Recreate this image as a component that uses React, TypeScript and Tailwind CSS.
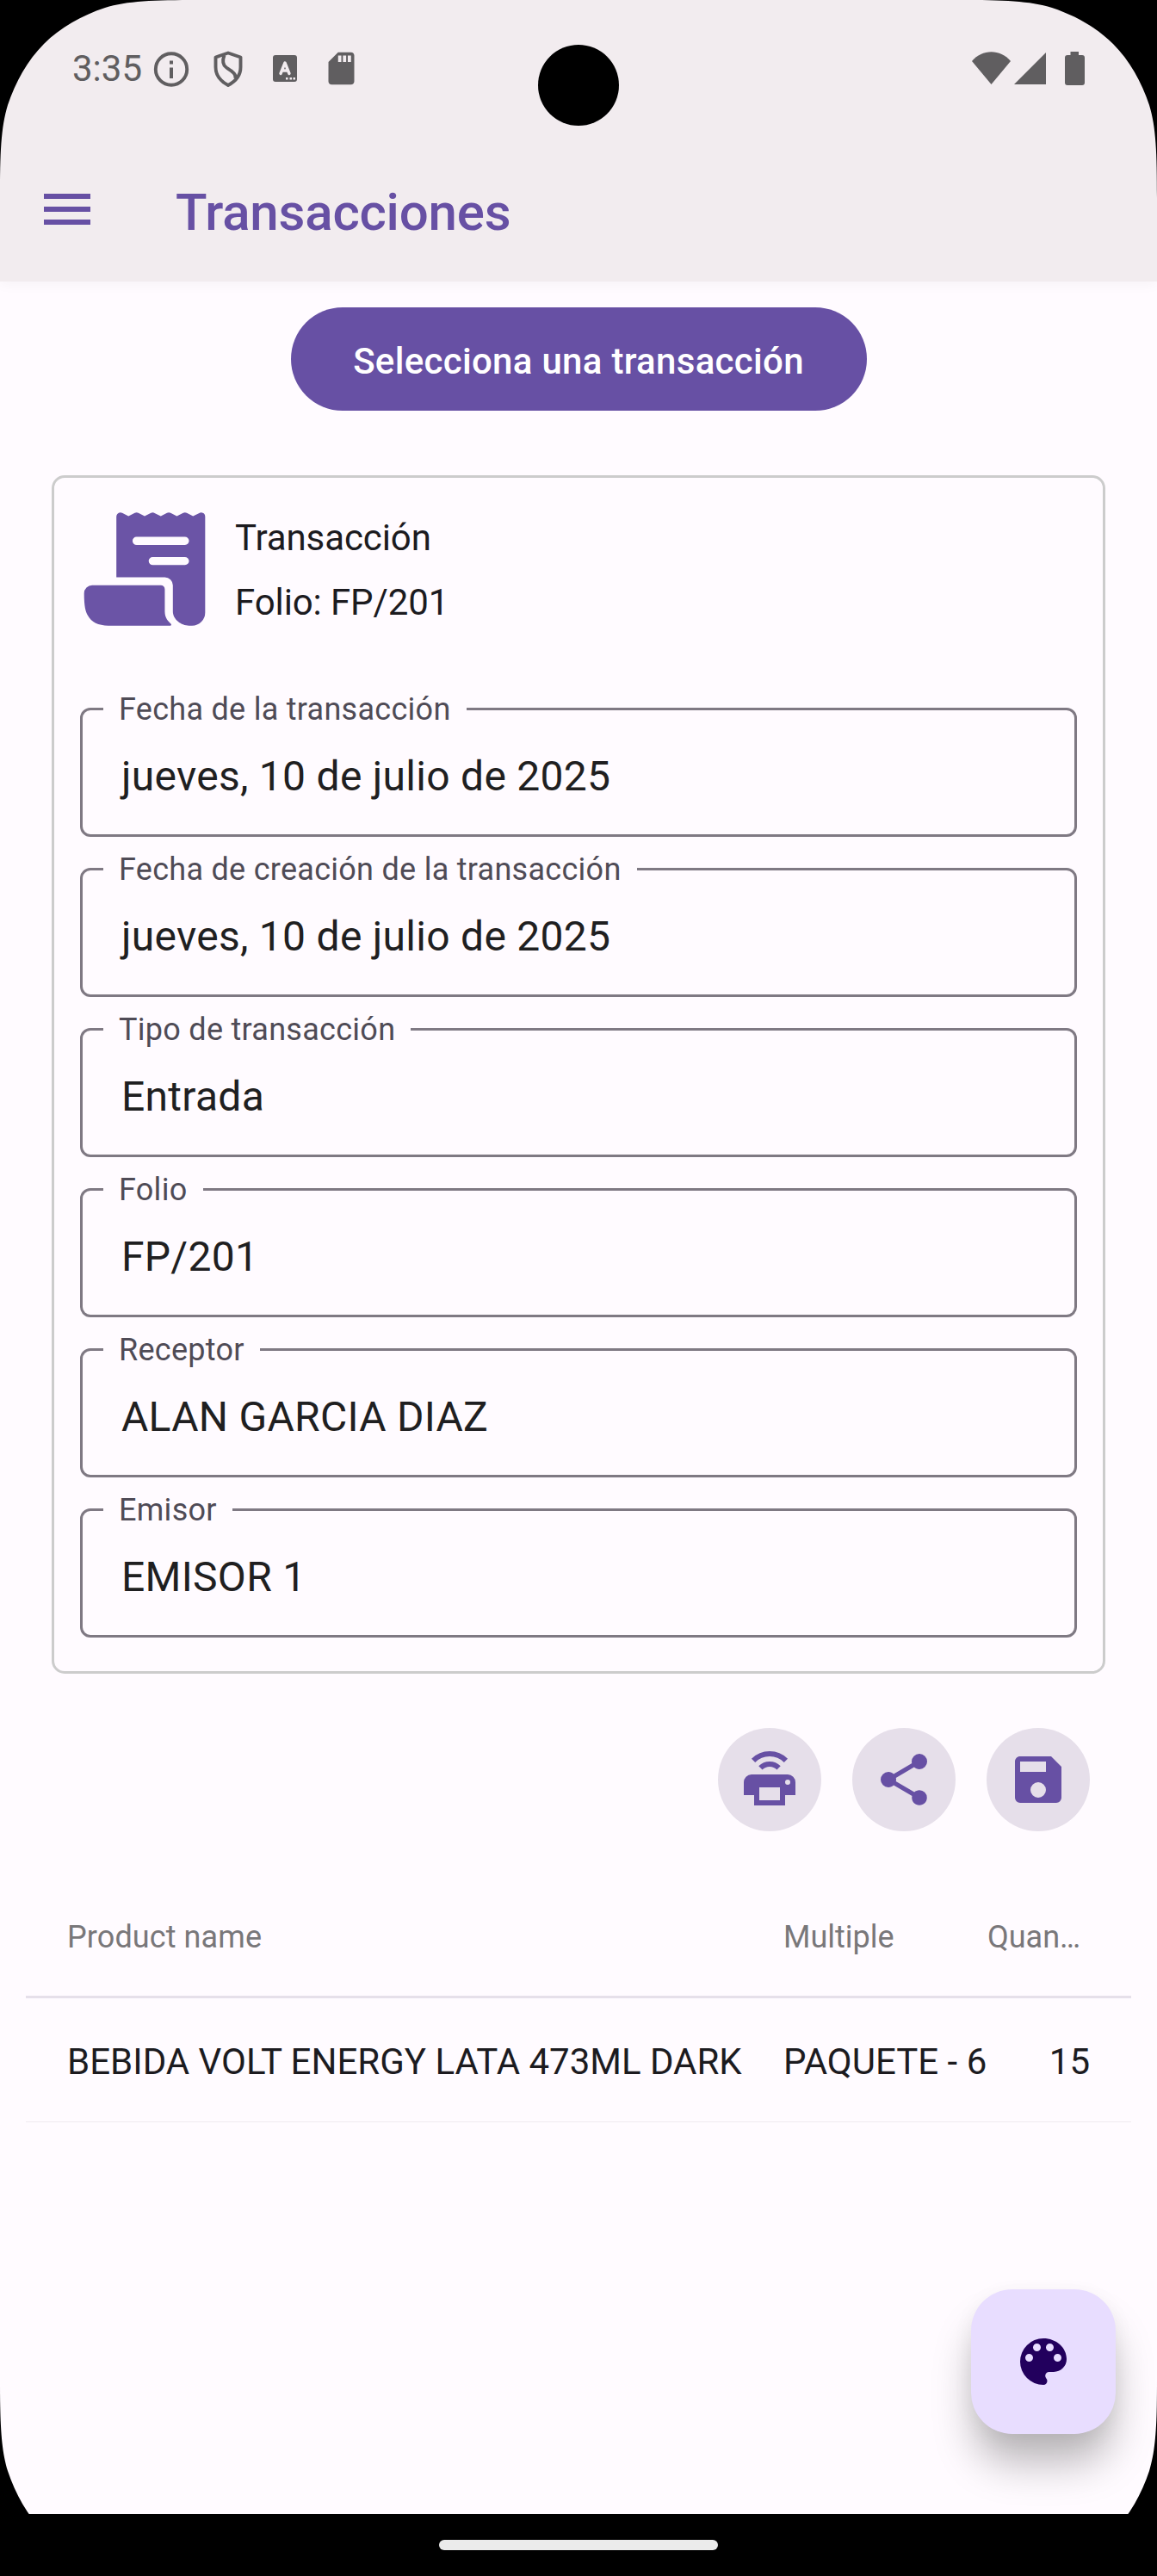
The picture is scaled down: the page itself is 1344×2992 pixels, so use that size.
import React from "react";
import { IoReceipt } from "react-icons/io5";
import { MdSdCard } from "react-icons/md";

const fields = [
  { label: "Fecha de la transacción", value: "jueves, 10 de julio de 2025" },
  { label: "Fecha de creación de la transacción", value: "jueves, 10 de julio de 2025" },
  { label: "Tipo de transacción", value: "Entrada" },
  { label: "Folio", value: "FP/201" },
  { label: "Receptor", value: "ALAN GARCIA DIAZ" },
  { label: "Emisor", value: "EMISOR 1" },
];

const rows = [{ name: "BEBIDA VOLT ENERGY LATA 473ML DARK", multiple: "PAQUETE - 6", quantity: "15" }];

function Corner({ className }: { className: string }) {
  return (
    <svg className={`absolute z-20 h-[230px] w-[230px] ${className}`} viewBox="0 0 230 230" aria-hidden="true">
      <path d="M0 0V230C0 178 1 148 9 122C18 95 32 70 51 51C70 32 95 18 122 9C148 1 178 0 230 0Z" fill="#000" />
    </svg>
  );
}

function StatusBar() {
  return (
    <div className="flex h-[159px] items-center pr-[84px] pl-[84px] text-[#605e60]">
      <span className="w-[91px] text-[42px] leading-[48px]">3:35</span>
      <svg className="size-12 shrink-0" viewBox="0 0 48 48" fill="none">
        <circle cx="24" cy="24.500" r="18.200" stroke="currentColor" strokeWidth="3.900" />
        <path d="M22 14.500h4v4h-4zM22 22.500h4V35h-4z" fill="currentColor" />
      </svg>
      <svg className="ml-[24px] h-[44px] w-[36px] shrink-0" viewBox="0 0 36 44" fill="none" stroke="currentColor" strokeWidth="3.900" strokeLinejoin="round">
        <path d="M18 3.500L32.500 8.500V20C32.500 29.500 26.500 36.500 18 41C9.500 36.500 3.500 29.500 3.500 20V8.500Z" />
        <path d="M13.500 6C11 13 11.500 17.500 16 20.500C22 24.500 27.500 27.500 26.500 33" />
      </svg>
      <svg className="ml-[34px] h-[31px] w-[28px] shrink-0" viewBox="0 0 28 31">
        <rect width="28" height="31" rx="3" fill="currentColor" />
        <path d="M9 21.500L14 9L19 21.500M10.500 18H17.500" fill="none" stroke="#f2ecef" strokeWidth="3.400" strokeLinejoin="round" strokeLinecap="round" />
        <path d="M15 26h2.500v2.500H15zM19.500 26H22v2.500h-2.500zM23.500 26H26v2.500h-2.500z" fill="#f2ecef" />
      </svg>
      <MdSdCard className="ml-[29px] size-[45px] shrink-0" />
      <div className="ml-auto flex h-[40px] items-start">
        <svg className="h-[40px] w-[131px]" viewBox="0 0 131 40" fill="currentColor">
          <path d="M0 11C12 -3.200 33 -3.200 45 11L22.500 38Z" />
          <path d="M49 38L86 1V38Z" />
          <path d="M114.500 0H124V4H128Q131 4 131 7V36Q131 39 128 39H111Q108 39 108 36V7Q108 4 111 4H114.500Z" />
        </svg>
      </div>
    </div>
  );
}

function Field({ label, value }: { label: string; value: string }) {
  return (
    <div className="relative flex h-[150px] items-center rounded-[12px] border-[3px] border-[#7f7983] pt-[9px] pl-[45px]">
      <span className="absolute top-[-25px] left-[24px] bg-[#fffbff] px-[18px] text-[36px] leading-[48px] tracking-[0.28px] whitespace-nowrap text-[#4f4b56]">
        {label}
      </span>
      <span className="text-[48px] leading-[60px] tracking-[0.28px] text-[#1f1f21]">{value}</span>
    </div>
  );
}

function ActionButton({ label, children }: { label: string; children: React.ReactNode }) {
  return (
    <button aria-label={label} className="flex size-[120px] items-center justify-center rounded-full bg-[#e6dfea] text-[#6750a4]">
      <svg className="size-[72px]" viewBox="0 0 24 24" fill="currentColor">
        {children}
      </svg>
    </button>
  );
}

export default function App() {
  return (
    <div className="relative flex h-[2992px] w-[1344px] flex-col overflow-hidden bg-[#fffbff] font-[Roboto,sans-serif] text-[#1c1b1f]">
      <Corner className="top-0 left-0" />
      <Corner className="top-0 right-0 -scale-x-100" />
      <Corner className="bottom-0 left-0 -scale-y-100" />
      <Corner className="right-0 bottom-0 -scale-100" />
      <div className="absolute top-[52px] left-[625px] z-20 size-[94px] rounded-full bg-black" />

      <header className="h-[327px] shrink-0 bg-[#f2ecef] shadow-[0_3px_15px_rgba(0,0,0,0.04)]">
        <StatusBar />
        <div className="flex h-[168px] items-center pl-[51px]">
          <button aria-label="Menú" className="flex w-[54px] flex-col gap-[9px]">
            <span className="h-[6px] bg-[#6750a4]" />
            <span className="h-[6px] bg-[#6750a4]" />
            <span className="h-[6px] bg-[#6750a4]" />
          </button>
          <h1 className="mt-[7px] ml-[99px] text-[60px] leading-[72px] font-medium tracking-[-0.2px] text-[#6750a4]">Transacciones</h1>
        </div>
      </header>

      <main className="flex grow flex-col">
        <button className="mt-[30px] flex h-[120px] w-[669px] items-center justify-center self-center rounded-full bg-[#6750a4] pt-[5px] text-[42px] leading-[60px] font-medium tracking-[0.3px] text-white">
          Selecciona una transacción
        </button>

        <section className="mx-[60px] mt-[75px] h-[1392px] rounded-[15px] border-[3px] border-[#cccccc] px-[30px] pt-[30px]">
          <div className="flex h-[150px]">
            <IoReceipt className="mt-[1px] size-[150px]  text-[#6b54a6]" />
            <div className="ml-[30px] text-[42px] leading-[75px] tracking-[-0.1px]">
              <p className="mt-[2px]">Transacción</p>
              <p>Folio: FP/201</p>
            </div>
          </div>
          <div className="mt-[87px] flex flex-col gap-[36px]">
            {fields.map((field) => (
              <Field key={field.label} {...field} />
            ))}
          </div>
        </section>

        <div className="mt-[63px] mr-[78px] flex justify-end gap-[36px]">
          <ActionButton label="Imprimir">
            <path fillRule="evenodd" d="M5 10H19A3 3 0 0 1 22 13V18H18V22H6V18H2V13A3 3 0 0 1 5 10ZM8 15V20H16V15ZM19 12A1 1 0 0 0 19 14A1 1 0 0 0 19 12Z" />
            <path d="M5.700 4.600A8.900 8.900 0 0 1 18.300 4.600M8.460 7.460A5 5 0 0 1 15.540 7.460" fill="none" stroke="currentColor" strokeWidth="2" />
          </ActionButton>
          <ActionButton label="Compartir">
            <path d="M18,16.080C17.240,16.080 16.560,16.380 16.040,16.850L8.910,12.700C8.960,12.470 9,12.240 9,12C9,11.760 8.960,11.530 8.910,11.300L15.960,7.190C16.500,7.690 17.210,8 18,8A3,3 0 0,0 21,5A3,3 0 0,0 18,2A3,3 0 0,0 15,5C15,5.240 15.040,5.470 15.090,5.700L8.040,9.810C7.500,9.310 6.790,9 6,9A3,3 0 0,0 3,12A3,3 0 0,0 6,15C6.790,15 7.500,14.690 8.040,14.190L15.160,18.340C15.110,18.550 15.080,18.770 15.080,19C15.080,20.610 16.390,21.910 18,21.910C19.610,21.910 20.920,20.610 20.920,19A2.920,2.920 0 0,0 18,16.080Z" />
          </ActionButton>
          <ActionButton label="Guardar">
            <path d="M15,9H5V5H15M12,19A3,3 0 0,1 9,16A3,3 0 0,1 12,13A3,3 0 0,1 15,16A3,3 0 0,1 12,19M17,3H5C3.890,3 3,3.900 3,5V19A2,2 0 0,0 5,21H19A2,2 0 0,0 21,19V7L17,3Z" />
          </ActionButton>
        </div>

        <div className="mx-[30px] mt-[50px]">
          <div className="flex h-[144px] items-center border-b-[3px] border-[#e6e0ea] px-[48px] pt-[4px] text-[36px] leading-[72px] text-[#79777a]">
            <span className="w-[832px] tracking-[0.1px]">Product name</span>
            <span className="w-[237px]">Multiple</span>
            <span className="grow">Quan…</span>
          </div>
          {rows.map((row) => (
            <div key={row.name} className="flex h-[144px] items-center border-b border-[#f0eaf0] px-[48px] pt-[4px] text-[42px] leading-[60px] whitespace-nowrap">
              <span className="w-[832px]">{row.name}</span>
              <span className="w-[237px]">{row.multiple}</span>
              <span className="grow text-right">{row.quantity}</span>
            </div>
          ))}
        </div>
      </main>

      <button
        aria-label="Cambiar tema"
        className="absolute top-[2659px] left-[1128px] flex size-[168px] items-center justify-center rounded-[48px] bg-[#e8ddff] text-[#22005d] shadow-[0_38px_48px_-4px_rgba(0,0,0,0.27),0_6px_24px_rgba(0,0,0,0.05)]"
      >
        <svg className="size-[72px]" viewBox="0 0 24 24" fill="currentColor">
          <path d="M17.500,12A1.500,1.500 0 0,1 16,10.500A1.500,1.500 0 0,1 17.500,9A1.500,1.500 0 0,1 19,10.500A1.500,1.500 0 0,1 17.500,12M14.500,8A1.500,1.500 0 0,1 13,6.500A1.500,1.500 0 0,1 14.500,5A1.500,1.500 0 0,1 16,6.500A1.500,1.500 0 0,1 14.500,8M9.500,8A1.500,1.500 0 0,1 8,6.500A1.500,1.500 0 0,1 9.500,5A1.500,1.500 0 0,1 11,6.500A1.500,1.500 0 0,1 9.500,8M6.500,12A1.500,1.500 0 0,1 5,10.500A1.500,1.500 0 0,1 6.500,9A1.500,1.500 0 0,1 8,10.500A1.500,1.500 0 0,1 6.500,12M12,3A9,9 0 0,0 3,12A9,9 0 0,0 12,21A1.500,1.500 0 0,0 13.500,19.500C13.500,19.110 13.350,18.760 13.110,18.500C12.880,18.230 12.730,17.880 12.730,17.500A1.500,1.500 0 0,1 14.230,16H16A5,5 0 0,0 21,11C21,6.580 16.970,3 12,3Z" />
        </svg>
      </button>

      <footer className="z-30 flex h-[72px] shrink-0 items-start justify-center bg-black pt-[30px]">
        <div className="h-[12px] w-[324px] rounded-full bg-[#ebebeb]" />
      </footer>
    </div>
  );
}
